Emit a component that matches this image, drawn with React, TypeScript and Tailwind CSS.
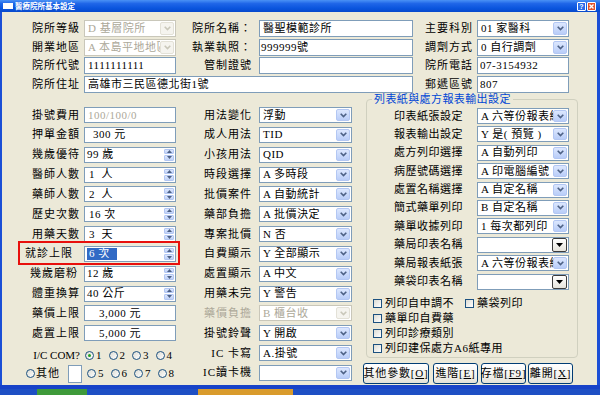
import React from "react";

const F = "font-['Liberation_Serif','Noto_Sans_CJK_TC',serif]";

function Chevron({ color }: { color: string }) {
  return (
    <svg width="7" height="5" viewBox="0 0 7 5">
      <path d="M0.7 0.8 L3.5 3.6 L6.3 0.8" fill="none" stroke={color} strokeWidth="1.6" />
    </svg>
  );
}

function DropBtn({ disabled }: { disabled?: boolean }) {
  return (
    <div
      className={`w-[14px] h-[calc(100%-2px)] mr-[1px] shrink-0 rounded-[2px] flex items-center justify-center border ${
        disabled
          ? "bg-[#F5F4EF] border-[#E3E1D7]"
          : "bg-[linear-gradient(#DCE7FE,#B9CDF8)] border-[#B3C7F3]"
      }`}
    >
      <Chevron color={disabled ? "#C9C7BA" : "#4D6185"} />
    </div>
  );
}

function ClassicBtn() {
  return (
    <div className="w-[15px] h-[14px] mr-[1px] shrink-0 rounded-[2px] border border-[#3C3C3C] bg-[linear-gradient(#FFFFFF,#E6E4DC)] flex items-center justify-center">
      <svg width="7" height="4" viewBox="0 0 7 4">
        <path d="M0 0 L7 0 L3.5 4Z" fill="#000" />
      </svg>
    </div>
  );
}

function Spin() {
  return (
    <div className="w-[10px] h-full shrink-0 flex flex-col gap-[1px] py-[1px] mr-[1px]">
      <div className="flex-1 rounded-[1px] bg-[linear-gradient(#DCE7FE,#BFD1F8)] border border-[#B3C7F3] flex items-center justify-center">
        <svg width="5" height="3" viewBox="0 0 5 3">
          <path d="M0 3 L2.5 0 L5 3Z" fill="#4D6185" />
        </svg>
      </div>
      <div className="flex-1 rounded-[1px] bg-[linear-gradient(#DCE7FE,#BFD1F8)] border border-[#B3C7F3] flex items-center justify-center">
        <svg width="5" height="3" viewBox="0 0 5 3">
          <path d="M0 0 L5 0 L2.5 3Z" fill="#4D6185" />
        </svg>
      </div>
    </div>
  );
}

type BoxProps = {
  cls: string;
  kind?: "text" | "sel" | "spin" | "classic";
  disabled?: boolean;
  pad?: string;
  children?: React.ReactNode;
};

function Box({ cls, kind = "text", disabled, pad = "pl-[3px]", children }: BoxProps) {
  const border = disabled && kind === "sel" ? "border-[#C9C7BA]" : "border-[#7F9DB9]";
  return (
    <div className={`${cls} h-full shrink-0 bg-white border ${border} flex items-center overflow-hidden`}>
      <div
        className={`flex-1 min-w-0 h-full flex items-center whitespace-pre overflow-hidden tracking-[0.5px] ${pad} ${
          disabled ? "text-[#ACA899]" : "text-black"
        }`}
      >
        {children}
      </div>
      {kind === "sel" && <DropBtn disabled={disabled} />}
      {kind === "spin" && <Spin />}
      {kind === "classic" && <ClassicBtn />}
    </div>
  );
}

function Lbl({ cls, children, gray }: { cls: string; children: React.ReactNode; gray?: boolean }) {
  return (
    <div className={`${cls} shrink-0 text-right whitespace-pre tracking-[1px] ${gray ? "text-[#ACA899]" : "text-black"}`}>
      {children}
    </div>
  );
}

function Radio({ checked }: { checked?: boolean }) {
  return (
    <span className="w-[9px] h-[9px] shrink-0 rounded-full border border-[#1C5180] bg-[linear-gradient(135deg,#DCDCD4,#FFFFFF)] flex items-center justify-center">
      {checked && <span className="w-[3px] h-[3px] rounded-full bg-[#21A121]" />}
    </span>
  );
}

function RadioItem({ n, checked }: { n: string; checked?: boolean }) {
  return (
    <div className="w-[23.5px] shrink-0 flex items-center whitespace-nowrap">
      <Radio checked={checked} />
      <span className="ml-[2px]">{n}</span>
    </div>
  );
}

function Check() {
  return (
    <span className="w-[9px] h-[9px] shrink-0 border border-[#1C5180] bg-[linear-gradient(135deg,#DCDCD4,#FFFFFF)]" />
  );
}

function LeftRow({ label, children, lblCls = "w-[78px]" }: { label: string; children: React.ReactNode; lblCls?: string }) {
  return (
    <div className="flex h-[16px] items-center">
      <Lbl cls={lblCls}>{label}</Lbl>
      <div className="w-[4px] shrink-0" />
      {children}
    </div>
  );
}

function MidRow({ label, gray, children }: { label: string; gray?: boolean; children: React.ReactNode }) {
  return (
    <div className="flex h-[16px] items-center">
      <Lbl cls="w-[72px]" gray={gray}>
        {label}
      </Lbl>
      <div className="w-[7px] shrink-0" />
      {children}
    </div>
  );
}

function GrpRow({ label, children }: { label: string; children: React.ReactNode }) {
  return (
    <div className="flex h-[16px] items-center">
      <div className="w-[96px] shrink-0 text-right tracking-[0.5px] whitespace-pre">{label}</div>
      <div className="w-[14px] shrink-0" />
      {children}
    </div>
  );
}

function Btn({ cls, text, key1 }: { cls: string; text: string; key1: string }) {
  return (
    <div
      className={`${cls} h-[21px] shrink-0 rounded-[3px] border border-[#003C74] bg-[linear-gradient(#FFFFFF,#F3F2EE_60%,#E3E0D6)] flex items-center justify-center whitespace-pre tracking-[0.8px]`}
    >
      {text}[<span className="underline underline-offset-[1px]">{key1}</span>]
    </div>
  );
}

export default function App() {
  return (
    <div className={`w-[600px] h-[395px] overflow-hidden flex flex-col bg-[#2552C8] text-[11px] leading-none text-black ${F}`}>
      {/* Title bar */}
      <div className="h-[12px] shrink-0 flex items-center bg-[linear-gradient(#4A92F5,#1F66E8_30%,#0A55DD_70%,#0849CC)] pl-[3px] pr-[4px]">
        <div className="w-[10px] h-[6px] bg-white" />
        <span className="ml-[2px] text-white font-bold text-[7.5px] font-['Noto_Sans_CJK_TC',sans-serif]">醫療院所基本設定</span>
        <div className="flex-1" />
        <div className="w-[9px] h-[9px] rounded-[1px] border border-white bg-[#2A6BEA] flex items-center justify-center text-white text-[7px] font-bold font-['Liberation_Sans',sans-serif]">
          ?
        </div>
        <div className="w-[9px] h-[9px] ml-[1px] rounded-[1px] border border-white bg-[#E2532D] flex items-center justify-center">
          <svg width="5" height="5" viewBox="0 0 5 5">
            <path d="M0.5 0.5 L4.5 4.5 M4.5 0.5 L0.5 4.5" stroke="#fff" strokeWidth="1.4" />
          </svg>
        </div>
      </div>

      {/* Window body */}
      <div className="h-[373px] shrink-0 bg-[#ECE9D8] border-l-2 border-r-[3px] border-[#1B4FD6] flex flex-col">
        {/* Top section */}
        <div className="flex flex-col gap-[1.5px] pt-[8px]">
          <div className="flex h-[17px] items-center">
            <Lbl cls="w-[78px]">院所等級</Lbl>
            <div className="w-[4px] shrink-0" />
            <Box cls="w-[92px]" kind="sel" disabled>D 基層院所</Box>
            <Lbl cls="w-[76px]">院所名稱：</Lbl>
            <div className="w-[7px] shrink-0" />
            <Box cls="w-[154px]">醫聖模範診所</Box>
            <Lbl cls="w-[60px]">主要科別</Lbl>
            <div className="w-[4px] shrink-0" />
            <Box cls="w-[92px]" kind="sel">01 家醫科</Box>
          </div>
          <div className="flex h-[17px] items-center">
            <Lbl cls="w-[78px]">開業地區</Lbl>
            <div className="w-[4px] shrink-0" />
            <Box cls="w-[92px]" kind="sel" disabled>A 本島平地地區</Box>
            <Lbl cls="w-[76px]">執業執照：</Lbl>
            <div className="w-[7px] shrink-0" />
            <Box cls="w-[154px]" pad="pl-[1px]">999999號</Box>
            <Lbl cls="w-[60px]">調劑方式</Lbl>
            <div className="w-[4px] shrink-0" />
            <Box cls="w-[92px]" kind="sel">0 自行調劑</Box>
          </div>
          <div className="flex h-[17px] items-center">
            <Lbl cls="w-[78px]">院所代號</Lbl>
            <div className="w-[4px] shrink-0" />
            <Box cls="w-[92px]">1111111111</Box>
            <Lbl cls="w-[76px]">管制證號</Lbl>
            <div className="w-[7px] shrink-0" />
            <Box cls="w-[154px]" />
            <Lbl cls="w-[60px]">院所電話</Lbl>
            <div className="w-[4px] shrink-0" />
            <Box cls="w-[92px]" pad="pl-[2px]">07-3154932</Box>
          </div>
          <div className="flex h-[17px] items-center">
            <Lbl cls="w-[78px]">院所住址</Lbl>
            <div className="w-[4px] shrink-0" />
            <Box cls="w-[329px]">高雄市三民區德北街1號</Box>
            <Lbl cls="w-[60px]">郵遞區號</Lbl>
            <div className="w-[4px] shrink-0" />
            <Box cls="w-[92px]" pad="pl-[2px]">807</Box>
          </div>
        </div>

        {/* Middle section */}
        <div className="flex mt-[0.5px]">
          {/* Left column */}
          <div className="w-[178px] shrink-0 pt-[14px] flex flex-col">
            <div className="flex flex-col gap-[3.85px]">
              <LeftRow label="掛號費用">
                <Box cls="w-[92px]" disabled>100/100/0</Box>
              </LeftRow>
              <LeftRow label="押單金額">
                <Box cls="w-[92px]" pad="pl-[8px]">300 元</Box>
              </LeftRow>
              <LeftRow label="幾歲優待">
                <Box cls="w-[92px]" kind="spin" pad="pl-[2px]">99 歲</Box>
              </LeftRow>
              <LeftRow label="醫師人數">
                <Box cls="w-[92px]" kind="spin" pad="pl-[4px]">1  人</Box>
              </LeftRow>
              <LeftRow label="藥師人數">
                <Box cls="w-[92px]" kind="spin" pad="pl-[4px]">2  人</Box>
              </LeftRow>
              <LeftRow label="歷史次數">
                <Box cls="w-[92px]" kind="spin" pad="pl-[4px]">16 次</Box>
              </LeftRow>
              <LeftRow label="用藥天數">
                <Box cls="w-[92px]" kind="spin" pad="pl-[4px]">3  天</Box>
              </LeftRow>
              <div className="relative flex h-[16px] items-center">
                <Lbl cls="w-[71px]">就診上限</Lbl>
                <div className="w-[11px] shrink-0" />
                <Box cls="w-[92px]" kind="spin" pad="pl-[2px]">
                  <span className="h-[12px] w-[30px] bg-[#316AC5] text-white flex items-center pl-[2px]">6 次</span>
                </Box>
                <span className="absolute left-[16px] top-[-5px] w-[162px] h-[24px] border-2 border-[#E8100C]" />
              </div>
              <LeftRow label="幾歲磨粉" lblCls="w-[76px]">
                <div className="w-[2px] shrink-0" />
                <Box cls="w-[92px]" kind="spin" pad="pl-[2px]">12 歲</Box>
              </LeftRow>
              <LeftRow label="體重換算">
                <Box cls="w-[92px]" kind="spin" pad="pl-[2px]">40 公斤</Box>
              </LeftRow>
              <LeftRow label="藥價上限">
                <Box cls="w-[92px]" pad="pl-[14px]">3,000 元</Box>
              </LeftRow>
              <LeftRow label="處置上限">
                <Box cls="w-[92px]" pad="pl-[14px]">5,000 元</Box>
              </LeftRow>
            </div>
            <div className="flex h-[16px] items-center mt-[6.65px]">
              <div className="w-[78px] shrink-0 text-right whitespace-pre tracking-[0px]">I/C COM?</div>
              <div className="w-[5px] shrink-0" />
              <RadioItem n="1" checked />
              <RadioItem n="2" />
              <RadioItem n="3" />
              <RadioItem n="4" />
            </div>
            <div className="flex h-[18px] items-center mt-[1px] pl-[24px] whitespace-nowrap">
              <Radio />
              <span className="ml-[1px] shrink-0 tracking-[1px] whitespace-nowrap">其他</span>
              <div className="ml-[8px] w-[14px] h-[18px] shrink-0 bg-white border border-[#7F9DB9]" />
              <div className="w-[5px] shrink-0" />
              <RadioItem n="5" />
              <RadioItem n="6" />
              <RadioItem n="7" />
              <RadioItem n="8" />
            </div>
          </div>

          {/* Middle column */}
          <div className="w-[178px] shrink-0 pt-[14px] flex flex-col gap-[3.85px]">
            <MidRow label="用法變化">
              <Box cls="w-[93px]" kind="sel">浮動</Box>
            </MidRow>
            <MidRow label="成人用法">
              <Box cls="w-[93px]" kind="sel">TID</Box>
            </MidRow>
            <MidRow label="小孩用法">
              <Box cls="w-[93px]" kind="sel">QID</Box>
            </MidRow>
            <MidRow label="時段選擇">
              <Box cls="w-[93px]" kind="sel">A 多時段</Box>
            </MidRow>
            <MidRow label="批價案件">
              <Box cls="w-[93px]" kind="sel">A 自動統計</Box>
            </MidRow>
            <MidRow label="藥部負擔">
              <Box cls="w-[93px]" kind="sel">A 批價決定</Box>
            </MidRow>
            <MidRow label="專案批價">
              <Box cls="w-[93px]" kind="sel">N 否</Box>
            </MidRow>
            <MidRow label="自費顯示">
              <Box cls="w-[93px]" kind="sel">Y 全部顯示</Box>
            </MidRow>
            <MidRow label="處置顯示">
              <Box cls="w-[93px]" kind="sel">A 中文</Box>
            </MidRow>
            <MidRow label="用藥未完">
              <Box cls="w-[93px]" kind="sel">Y 警告</Box>
            </MidRow>
            <MidRow label="藥價負擔" gray>
              <Box cls="w-[93px]" kind="sel" disabled>B 櫃台收</Box>
            </MidRow>
            <MidRow label="掛號鈴聲">
              <Box cls="w-[93px]" kind="sel">Y 開啟</Box>
            </MidRow>
            <MidRow label="IC 卡寫">
              <Box cls="w-[93px]" kind="sel">A.掛號</Box>
            </MidRow>
            <MidRow label="IC讀卡機">
              <Box cls="w-[93px]" kind="sel" />
            </MidRow>
          </div>

          {/* Right column */}
          <div className="flex-1 flex flex-col">
            <fieldset className="ml-[8px] w-[212px] border border-[#D0D0BF] rounded-[4px] pb-[1px]">
              <legend className="ml-[5px] px-[2px] leading-[12px] text-[#0046D5] tracking-[0.4px]">列表紙與處方報表輸出設定</legend>
              <div className="pt-[3px] flex flex-col gap-[2.4px]">
                <GrpRow label="印表紙張設定">
                  <Box cls="w-[92px]" kind="sel">A 六等份報表紙</Box>
                </GrpRow>
                <GrpRow label="報表輸出設定">
                  <Box cls="w-[92px]" kind="sel">Y 是( 預覽 )</Box>
                </GrpRow>
                <GrpRow label="處方列印選擇">
                  <Box cls="w-[92px]" kind="sel">A 自動列印</Box>
                </GrpRow>
                <GrpRow label="病歷號碼選擇">
                  <Box cls="w-[92px]" kind="sel">A 印電腦編號</Box>
                </GrpRow>
                <GrpRow label="處置名稱選擇">
                  <Box cls="w-[92px]" kind="sel">A 自定名稱</Box>
                </GrpRow>
                <GrpRow label="簡式藥單列印">
                  <Box cls="w-[92px]" kind="sel">B 自定名稱</Box>
                </GrpRow>
                <GrpRow label="藥單收據列印">
                  <Box cls="w-[92px]" kind="sel">1 每次都列印</Box>
                </GrpRow>
                <GrpRow label="藥局印表名稱">
                  <Box cls="w-[92px]" kind="classic" />
                </GrpRow>
                <GrpRow label="藥局報表紙張">
                  <Box cls="w-[92px]" kind="sel">A 六等份報表紙</Box>
                </GrpRow>
                <GrpRow label="藥袋印表名稱">
                  <Box cls="w-[92px]" kind="classic" />
                </GrpRow>
              </div>
              <div className="mt-[6px] flex flex-col pl-[6px] tracking-[0.5px]">
                <div className="h-[15px] flex items-center">
                  <Check />
                  <span className="ml-[3px]">列印自申調不</span>
                  <div className="ml-[11px] flex items-center">
                    <Check />
                    <span className="ml-[3px]">藥袋列印</span>
                  </div>
                </div>
                <div className="h-[15px] flex items-center">
                  <Check />
                  <span className="ml-[3px]">藥單印自費藥</span>
                </div>
                <div className="h-[15px] flex items-center">
                  <Check />
                  <span className="ml-[3px]">列印診療類別</span>
                </div>
                <div className="h-[15px] flex items-center">
                  <Check />
                  <span className="ml-[3px]">列印建保處方A6紙專用</span>
                </div>
              </div>
            </fieldset>
            <div className="flex mt-[5px] ml-[5px]">
              <Btn cls="w-[66px]" text="其他參數" key1="O" />
              <div className="w-[4px] shrink-0" />
              <Btn cls="w-[45px]" text="進階" key1="E" />
              <div className="w-[3px] shrink-0" />
              <Btn cls="w-[45px]" text="存檔" key1="F9" />
              <div className="w-[2px] shrink-0" />
              <Btn cls="w-[45px]" text="離開" key1="X" />
            </div>
          </div>
        </div>
      </div>

      {/* Bottom frame */}
      <div className="h-[4px] shrink-0 bg-[#1843C8]" />
      {/* Desktop strip */}
      <div className="flex-1 flex bg-[#1E4FC4]">
        <div className="w-[37px] shrink-0" />
        <div className="w-[50px] shrink-0 bg-[#3E9A3A]" />
        <div className="w-[111px] shrink-0" />
        <div className="w-[95px] shrink-0 bg-[#D99B2C]" />
      </div>
    </div>
  );
}
